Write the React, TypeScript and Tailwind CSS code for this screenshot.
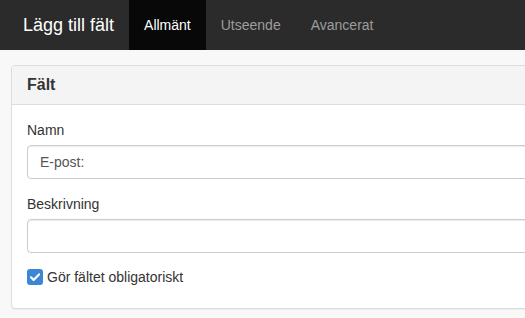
import React, { useState } from 'react';

const tabs = ['Allmänt', 'Utseende', 'Avancerat'];

const App: React.FC = () => {
  const [active, setActive] = useState('Allmänt');
  const [name, setName] = useState('E-post:');
  const [desc, setDesc] = useState('');
  const [required, setRequired] = useState(true);

  return (
    <div className="min-h-[318px] w-[525px] overflow-hidden bg-[#f8f8f8] text-[14px] text-[#333] font-['Liberation_Sans',Arial,sans-serif]">
      <div className="flex h-[50px] items-stretch bg-[#2b2b2b] pl-2">
        <div className="flex items-center px-[15px] text-[18px] leading-5 text-white">Lägg till fält</div>
        {tabs.map(t => (
          <button
            key={t}
            onClick={() => setActive(t)}
            className={`flex items-center px-[15px] leading-5 ${active === t ? 'bg-[#080808] text-white' : 'text-[#9d9d9d]'}`}
          >
            {t}
          </button>
        ))}
      </div>

      <div className="pt-[15px] pl-[11px]">
        <div className="w-[580px] shrink-0 rounded-[4px] border border-[#ddd] bg-white shadow-[0_1px_1px_rgba(0,0,0,0.05)]">
          <div className="h-[39px] rounded-t-[4px] border-b border-[#ddd] bg-[#f4f4f4] px-[15px] py-[9px] text-[16px] font-bold leading-5">
            Fält
          </div>
          <div className="p-[15px]">
            <div className="mb-[15px]">
              <label className="mb-[5px] block leading-5">Namn</label>
              <input
                value={name}
                onChange={e => setName(e.target.value)}
                className="block h-[34px] w-full rounded-[4px] border border-[#ccc] px-3 text-[#555] shadow-[inset_0_1px_1px_rgba(0,0,0,0.075)] outline-none"
              />
            </div>
            <div>
              <label className="mb-[5px] block leading-5">Beskrivning</label>
              <input
                value={desc}
                onChange={e => setDesc(e.target.value)}
                className="block h-[34px] w-full rounded-[4px] border border-[#ccc] px-3 text-[#555] shadow-[inset_0_1px_1px_rgba(0,0,0,0.075)] outline-none"
              />
            </div>
            <label className="mt-[14px] mb-[6px] flex h-5 cursor-pointer items-center gap-[4px] leading-5">
              <span
                onClick={() => setRequired(!required)}
                className={`flex h-4 w-4 items-center justify-center rounded-[3px] ${required ? 'bg-[#3b87d6]' : 'border border-[#767676] bg-white'}`}
              >
                {required && (
                  <svg viewBox="0 0 16 16" className="h-4 w-4">
                    <path d="M4 8.3l2.6 2.6L12 5.4" fill="none" stroke="white" strokeWidth="2.2" strokeLinecap="round" strokeLinejoin="round" />
                  </svg>
                )}
              </span>
              <span>Gör fältet obligatoriskt</span>
            </label>
          </div>
        </div>
      </div>
    </div>
  );
};

export default App;
